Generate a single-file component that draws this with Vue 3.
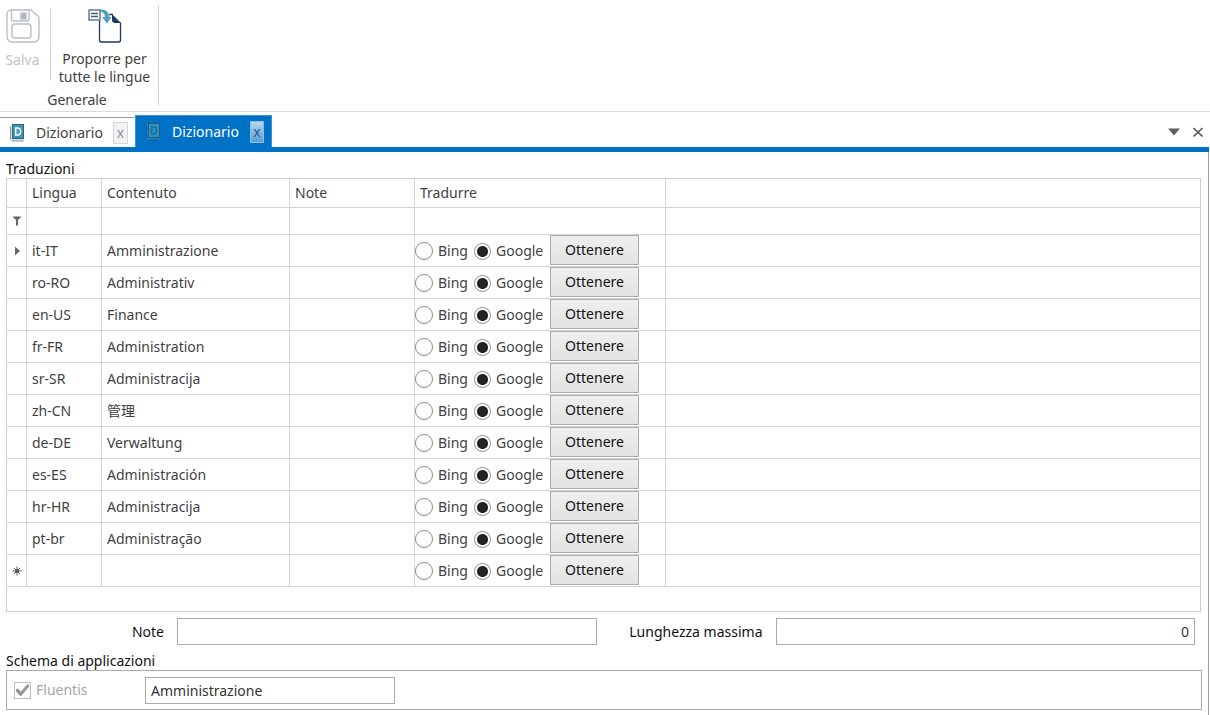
<script setup>
import { reactive, ref } from 'vue'

const rows = reactive([
  { lang: 'it-IT', text: 'Amministrazione', engine: 'google', mark: 'current' },
  { lang: 'ro-RO', text: 'Administrativ', engine: 'google' },
  { lang: 'en-US', text: 'Finance', engine: 'google' },
  { lang: 'fr-FR', text: 'Administration', engine: 'google' },
  { lang: 'sr-SR', text: 'Administracija', engine: 'google' },
  { lang: 'zh-CN', text: '管理', engine: 'google' },
  { lang: 'de-DE', text: 'Verwaltung', engine: 'google' },
  { lang: 'es-ES', text: 'Administración', engine: 'google' },
  { lang: 'hr-HR', text: 'Administracija', engine: 'google' },
  { lang: 'pt-br', text: 'Administração', engine: 'google' },
  { lang: '', text: '', engine: 'google', mark: 'new' },
])
const tabs = [
  { id: 1, title: 'Dizionario' },
  { id: 2, title: 'Dizionario' },
]
const activeTab = ref(2)
const note = ref('')
const maxLength = ref('0')
const schemaText = ref('Amministrazione')
const fluentis = ref(true)
</script>

<template>
  <div class="window">
    <header class="ribbon">
      <section class="group">
        <div class="tools">
          <button class="tool save" type="button" disabled>
            <svg width="34" height="34" viewBox="0 0 34 34" fill="none" stroke="#b9c0ca" stroke-width="1.4">
              <path d="M5 1H25L33 8V28a5 5 0 0 1-5 5H6a5 5 0 0 1-5-5V5a4 4 0 0 1 4-4Z" />
              <path d="M5.500 1V10a2 2 0 0 0 2 2H21a2 2 0 0 0 2-2V1" />
              <rect x="6" y="15" width="19" height="14" rx="3" />
              <rect x="15" y="4" width="5" height="6" fill="#aeb6c0" />
            </svg>
            <span>Salva</span>
          </button>
          <button class="tool propose" type="button">
            <svg width="34" height="36" viewBox="0 0 34 36" fill="none">
              <path d="M11.500 11.500V31a2 2 0 0 0 2 2H30.500a2 2 0 0 0 2-2V13.500M21 5.500H25" stroke="#1f3a5f" stroke-width="1.300" />
              <path d="M24 5L33 14H27a3 3 0 0 1-3-3Z" fill="#1f3a5f" />
              <rect x="1" y="1" width="11" height="10" fill="#fff" stroke="#43597a" stroke-width="1.200" />
              <path d="M3 4.500H10M3 7.500H10" stroke="#43597a" stroke-width="1.400" />
              <path d="M12 0.500C18 0 21 3 21 8H23.500L19 14.500L14 8H17C17 5 15.500 3 12 3Z" fill="#4aa0bd" />
            </svg>
            <span>Proporre per<br />tutte le lingue</span>
          </button>
        </div>
        <div class="group-name">Generale</div>
      </section>
    </header>

    <nav class="tabs">
      <div v-for="tab in tabs" :key="tab.id" class="tab" :class="{ active: tab.id === activeTab }">
        <button class="tab-title" type="button" @click="activeTab = tab.id">
          <svg width="16" height="18" viewBox="0 0 16 18">
            <path class="pages" d="M1 16V2.500L3 0.500V14H15V17H2Z" />
            <path class="edge" d="M1.500 2.500V15.500M2.500 17H14.500" />
            <rect class="cover" x="3.500" y="0.500" width="11" height="14" />
            <path class="letter" d="M6.700 4V11H8.500C12.700 11 12.700 4 8.500 4Z" />
          </svg>
          <span>{{ tab.title }}</span>
        </button>
        <button class="tab-close" type="button" aria-label="Chiudi scheda">x</button>
      </div>
      <div class="tab-tools">
        <button type="button" aria-label="Elenco schede">
          <svg width="12" height="12" viewBox="0 0 12 12"><path d="M0 2.500H12L6 9.500Z" fill="#5f5f5f" /></svg>
        </button>
        <button type="button" aria-label="Chiudi">
          <svg width="12" height="12" viewBox="0 0 12 12"><path d="M1.500 2L10.500 10.500M10.500 2L1.500 10.500" stroke="#555" stroke-width="1.700" /></svg>
        </button>
      </div>
    </nav>

    <main class="document">
      <h2>Traduzioni</h2>
      <div class="grid">
        <table>
          <colgroup>
            <col class="c-mark" /><col class="c-lang" /><col class="c-text" />
            <col class="c-note" /><col class="c-action" /><col />
          </colgroup>
          <thead>
            <tr>
              <th></th><th>Lingua</th><th>Contenuto</th><th>Note</th><th>Tradurre</th><th></th>
            </tr>
          </thead>
          <tbody>
            <tr class="filter">
              <td class="mark">
                <svg width="10" height="10" viewBox="0 0 10 10"><path d="M0.500 0.500H9.500L6 4V9.500H4V4Z" fill="#666" /></svg>
              </td>
              <td></td><td></td><td></td><td></td><td></td>
            </tr>
            <tr v-for="(row, i) in rows" :key="i">
              <td class="mark">
                <svg v-if="row.mark === 'current'" width="10" height="10" viewBox="0 0 10 10"><path d="M3 0.500L8 5L3 9.500Z" fill="#666" /></svg>
                <svg v-if="row.mark === 'new'" width="10" height="10" viewBox="0 0 10 10">
                  <path d="M5 0.500V9.500M0.500 5H9.500M2 2L8 8M8 2L2 8" stroke="#666" stroke-width="1" />
                  <circle cx="5" cy="5" r="2" fill="#555" />
                </svg>
              </td>
              <td>{{ row.lang }}</td>
              <td>{{ row.text }}</td>
              <td></td>
              <td class="action">
                <div class="engine">
                  <label><input v-model="row.engine" type="radio" value="bing" :name="'engine' + i" />Bing</label>
                  <label><input v-model="row.engine" type="radio" value="google" :name="'engine' + i" />Google</label>
                  <button type="button">Ottenere</button>
                </div>
              </td>
              <td></td>
            </tr>
          </tbody>
        </table>
      </div>

      <div class="fields">
        <label for="note">Note</label>
        <input id="note" v-model="note" type="text" />
        <label for="max-length">Lunghezza massima</label>
        <input id="max-length" v-model="maxLength" class="number" type="text" />
      </div>

      <h2>Schema di applicazioni</h2>
      <div class="schema">
        <label class="check"><input v-model="fluentis" type="checkbox" disabled />Fluentis</label>
        <input v-model="schemaText" type="text" aria-label="Fluentis" />
      </div>
    </main>
  </div>
</template>

<style>
body {
  background: #fff;
}
</style>

<style scoped>
.window {
  font-family: "Noto Sans", "Open Sans", "Noto Sans CJK SC", sans-serif;
  font-size: 14px;
  line-height: 18px;
  color: #3f3f3f;
  min-height: 100vh;
  box-sizing: border-box;
  display: flex;
  flex-direction: column;
  overflow: hidden;
}
button,
input {
  font: inherit;
  color: inherit;
  margin: 0;
  padding: 0;
  box-sizing: border-box;
}
button {
  border: 0;
  background: none;
}
svg {
  display: block;
  flex: none;
}

.ribbon {
  display: flex;
  padding: 5px 0;
  border-bottom: 1px solid #dcdcdc;
}
.group {
  width: 158px;
  border-right: 1px solid #d4d4d4;
  height: 101px;
}
.tools {
  display: flex;
  height: 86px;
}
.tool {
  display: flex;
  flex-direction: column;
  align-items: center;
  white-space: nowrap;
}
.save {
  width: 51px;
  height: 71px;
  margin-top: 4px;
  padding-right: 5px;
  gap: 8px;
  border-right: 1px solid #d4d4d4;
  color: #c3c3c3;
}
.propose {
  width: 107px;
  padding-top: 4px;
  gap: 5px;
}
.group-name {
  text-align: center;
  padding-right: 4px;
}

.tabs {
  display: flex;
  align-items: flex-end;
  height: 35px;
  margin-right: 1px;
  border-bottom: 5px solid #0072c6;
}
.tab {
  display: flex;
  align-items: center;
  box-sizing: border-box;
  width: 135px;
  height: 30px;
  padding: 0 7px 0 9px;
  border-top: 1px solid #9b9b9b;
}
.tab-title {
  display: flex;
  align-items: center;
  gap: 11px;
  flex: 1;
}
.tab.active {
  width: 137px;
  height: 32px;
  padding: 0 7px 0 9px;
  color: #fff;
  background: #0072c6;
  border: 1px solid #3a93d6;
  border-bottom: 0;
}
.pages {
  fill: #d5dde2;
}
.edge {
  fill: none;
  stroke: #8a9aa8;
  stroke-width: 1;
}
.cover {
  fill: #3f95b3;
  stroke: #2c6684;
  stroke-width: 1;
}
.letter {
  fill: none;
  stroke: #fff;
  stroke-width: 1.5;
}
.active .pages {
  fill: #2380bd;
}
.active .edge {
  stroke: #145f9c;
}
.active .cover {
  fill: #388fae;
  stroke: #1c5d88;
}
.active .letter {
  stroke: #0072c6;
}
.tab-close {
  width: 15px;
  height: 22px;
  color: #8795a3;
  background: #f2f2f2;
  border: 1px solid #d6d6d6;
}
.active .tab-close {
  width: 14px;
  color: #1f5c94;
  background: linear-gradient(#b5d6ee, #5a9fd6);
  border: 1px solid #8dbde3;
}
.tab-tools {
  display: flex;
  gap: 12px;
  margin-left: auto;
  padding: 0 5px 9px 0;
}

.document {
  flex: 1;
  margin-right: 1px;
  padding: 7px 7px 5px 6px;
  border-right: 1px solid #a0a0a0;
}
h2 {
  margin: 0;
  font-size: 14px;
  font-weight: 400;
  line-height: 19px;
  color: #111;
}
.grid {
  border: 1px solid #d0d0d0;
  padding-bottom: 24px;
}
table {
  width: 100%;
  table-layout: fixed;
  border-collapse: separate;
  border-spacing: 0;
}
.c-mark { width: 20px; }
.c-lang { width: 75px; }
.c-text { width: 188px; }
.c-note { width: 125px; }
.c-action { width: 251px; }
th,
td {
  box-sizing: border-box;
  height: 32px;
  padding: 0 5px;
  text-align: left;
  font-weight: 400;
  vertical-align: middle;
  border-right: 1px solid #d4d4d4;
  border-bottom: 1px solid #d4d4d4;
}
th {
  height: 29px;
}
.filter td {
  height: 27px;
}
th:last-child,
td:last-child {
  border-right: 0;
}
td.mark {
  padding: 0 4px 0 5px;
}
td.action {
  padding: 0;
  vertical-align: top;
}
.engine {
  display: flex;
  align-items: center;
}
.engine label {
  display: flex;
  align-items: center;
  gap: 5px;
  width: 59px;
  padding-top: 2px;
}
.engine label + label {
  width: 76px;
}
input[type="radio"] {
  appearance: none;
  flex: none;
  width: 18px;
  height: 18px;
  border: 1px solid #8c8c8c;
  border-radius: 50%;
  background: #fff;
}
input[type="radio"]:checked {
  width: 17px;
  height: 17px;
  background: radial-gradient(circle, #222 5px, #fff 6px);
}
.engine button {
  width: 89px;
  height: 30px;
  color: #111;
  background: linear-gradient(#efefef, #e2e2e2);
  border: 1px solid #acacac;
}

.fields {
  display: grid;
  grid-template-columns: 158px 1fr 166px 1fr;
  align-items: center;
  margin: 6px 6px 6px 0;
  color: #111;
}
.fields label {
  text-align: right;
}
input[type="text"] {
  width: auto;
  min-width: 0;
  height: 27px;
  padding: 0 5px;
  color: #333;
  background: #fff;
  border: 1px solid #ababab;
}
.fields input {
  margin-left: 13px;
}
.fields .number {
  text-align: right;
}
.schema {
  display: flex;
  align-items: center;
  box-sizing: border-box;
  height: 40px;
  padding: 0 7px;
  margin-right: -1px;
  border: 1px solid #ababab;
}
.schema > input {
  width: 250px;
}
.check {
  display: flex;
  align-items: center;
  gap: 5px;
  width: 131px;
  color: #a6a6a6;
}
input[type="checkbox"] {
  appearance: none;
  display: grid;
  place-items: center;
  width: 17px;
  height: 17px;
  border: 1px solid #bdbdbd;
}
input[type="checkbox"]:checked::after {
  content: "";
  width: 13px;
  height: 12px;
  background: #999;
  clip-path: polygon(0 44%, 14% 38%, 38% 62%, 88% 0, 100% 8%, 100% 22%, 40% 100%, 32% 100%, 0 62%);
}
</style>
